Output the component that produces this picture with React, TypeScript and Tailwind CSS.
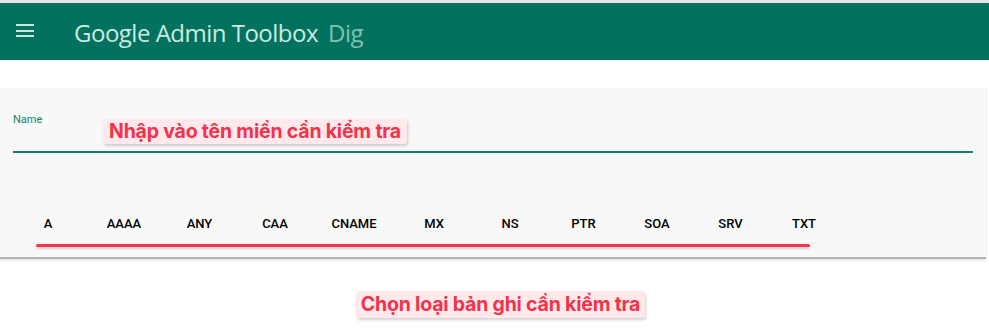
import { useState } from "react";

const recordTypes = [
  { label: "A", width: "w-[76px]" },
  { label: "AAAA", width: "w-[76px]" },
  { label: "ANY", width: "w-[75px]" },
  { label: "CAA", width: "w-[76px]" },
  { label: "CNAME", width: "w-[82px]" },
  { label: "MX", width: "w-[78px]" },
  { label: "NS", width: "w-[74px]" },
  { label: "PTR", width: "w-[73px]" },
  { label: "SOA", width: "w-[74px]" },
  { label: "SRV", width: "w-[73px]" },
  { label: "TXT", width: "w-[74px]" },
];

export default function App() {
  const [active, setActive] = useState("A");
  const [domain, setDomain] = useState("");

  return (
    <div className="w-[989px] h-[336px] bg-white font-['Roboto',sans-serif] overflow-hidden">
      <div className="h-[3px] bg-[#e6e6e6]" />

      {/* app bar */}
      <header className="h-[57px] bg-[#02725f] flex items-center">
        <button className="ml-[16px] w-[18px] flex flex-col gap-[3.5px] -mt-[2px]">
          <span className="block h-[2px] bg-[#c8e6df]" />
          <span className="block h-[2px] bg-[#c8e6df]" />
          <span className="block h-[2px] bg-[#c8e6df]" />
        </button>
        <h1 className="ml-[40px] mt-[2px] text-[24px] tracking-[-0.5px] text-[#cde9e2] font-['Open_Sans',sans-serif]">
          Google Admin Toolbox
          <span className="ml-[10px] text-[#80c2b4]">Dig</span>
        </h1>
      </header>

      <div className="h-[28px]" />

      {/* form card */}
      <section className="w-[986px] bg-[#f8f8f8] border-b-2 border-[#b4b4b4] shadow-[0_1px_2px_rgba(0,0,0,0.15)]">
        <div className="pt-[25px] pl-[13px] pr-[13px]">
          <div className="relative">
            <label className="block text-[11px] text-[#12806f] leading-[14px]">Name</label>
            <input
              value={domain}
              onChange={(e) => setDomain(e.target.value)}
              className="w-full h-[24px] bg-transparent outline-none text-[14px]"
            />
            <div className="h-[2px] bg-[#12806f]" />
            <div className="absolute left-[90px] top-[6px] rounded-[3px] bg-[#ffe9eb] px-[6px] h-[25px] flex items-center shadow-[1px_2px_3px_rgba(0,0,0,0.18)]">
              <span className="text-[19.5px] font-bold text-[#f2334b] font-['Inter',sans-serif] tracking-[-0.2px]">
                Nhập vào tên miền cần kiểm tra
              </span>
            </div>
          </div>
        </div>

        {/* record type tabs */}
        <div className="mt-[47px] pl-[10px] flex h-[48px] items-center">
          {recordTypes.map((t) => (
            <button
              key={t.label}
              onClick={() => setActive(t.label)}
              className={`${t.width} h-full flex items-center justify-center text-[13px] font-medium text-black`}
            >
              {t.label}
            </button>
          ))}
        </div>
        <div className="-mt-[4px] ml-[36px] w-[774px] h-[3px] rounded-full bg-[#f6364c] shadow-[0_2px_2px_rgba(0,0,0,0.15)]" />
        <div className="h-[10px]" />
      </section>

      {/* annotation */}
      <div className="flex justify-center pl-[12px] mt-[32px]">
        <div className="rounded-[3px] bg-[#ffe9eb] px-[5px] h-[27px] flex items-center shadow-[1px_2px_3px_rgba(0,0,0,0.18)]">
          <span className="text-[19.5px] font-bold text-[#f2334b] font-['Inter',sans-serif] tracking-[-0.2px]">
            Chọn loại bản ghi cần kiểm tra
          </span>
        </div>
      </div>
    </div>
  );
}
